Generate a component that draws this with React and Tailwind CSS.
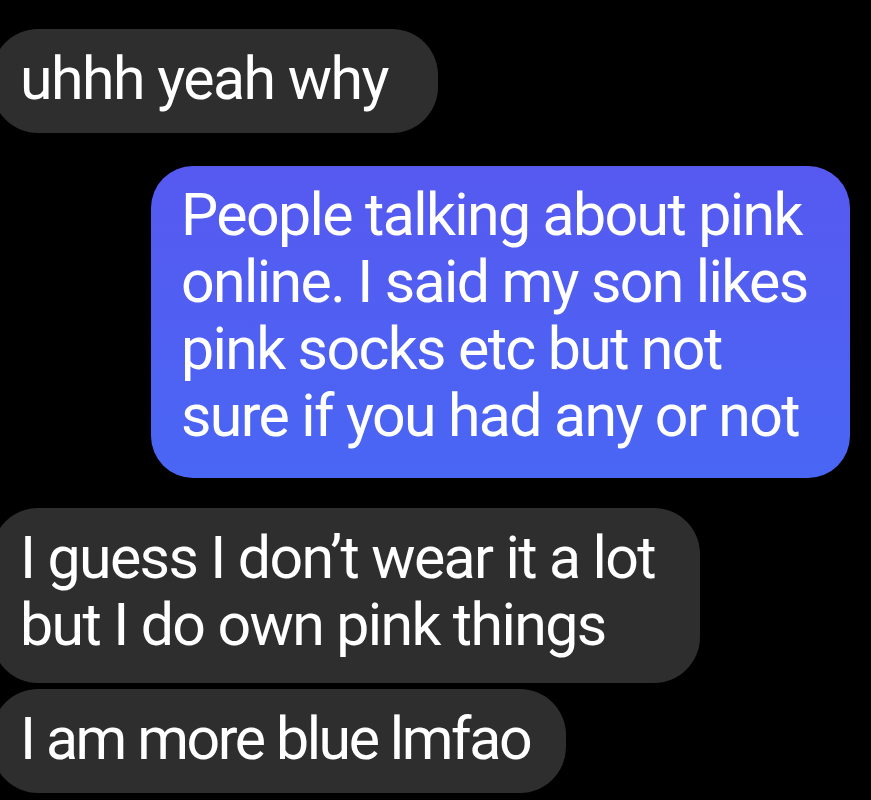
export default function App() {
  const font = { fontFamily: 'Roboto, "Noto Sans", sans-serif' };
  return (
    <div className="w-[871px] h-[800px] bg-black overflow-hidden text-white" style={font}>
      <div className="flex flex-col pt-[29px]">
        <div className="self-start ml-[-8px] w-[446px] bg-[#2e2e2e] rounded-[46px] pl-[28px] pt-[16px] pb-[21px] text-[59px] leading-[67px] tracking-[-1.5px] whitespace-nowrap">
          uhhh yeah why
        </div>
        <div className="self-end mr-[21px] mt-[33px] w-[699px] rounded-[42px] bg-gradient-to-b from-[#5659f0] to-[#4966f4] pl-[30px] pt-[15px] pb-[29px] text-[59px] leading-[67px] tracking-[-1.6px] whitespace-nowrap">
          People talking about pink<br />online. I said my son likes<br />pink socks etc but not<br />sure if you had any or not
        </div>
        <div className="self-start ml-[-8px] mt-[30px] w-[708px] bg-[#2e2e2e] rounded-[46px] pl-[28px] pt-[16px] pb-[25px] text-[59px] leading-[67px] tracking-[-1.6px] whitespace-nowrap">
          I guess I don’t wear it a lot<br />but I do own pink things
        </div>
        <div className="self-start ml-[-8px] mt-[6px] w-[574px] bg-[#2e2e2e] rounded-[46px] pl-[28px] pt-[16px] pb-[21px] text-[59px] leading-[67px] tracking-[-2.4px] whitespace-nowrap">
          I am more blue lmfao
        </div>
      </div>
    </div>
  );
}
